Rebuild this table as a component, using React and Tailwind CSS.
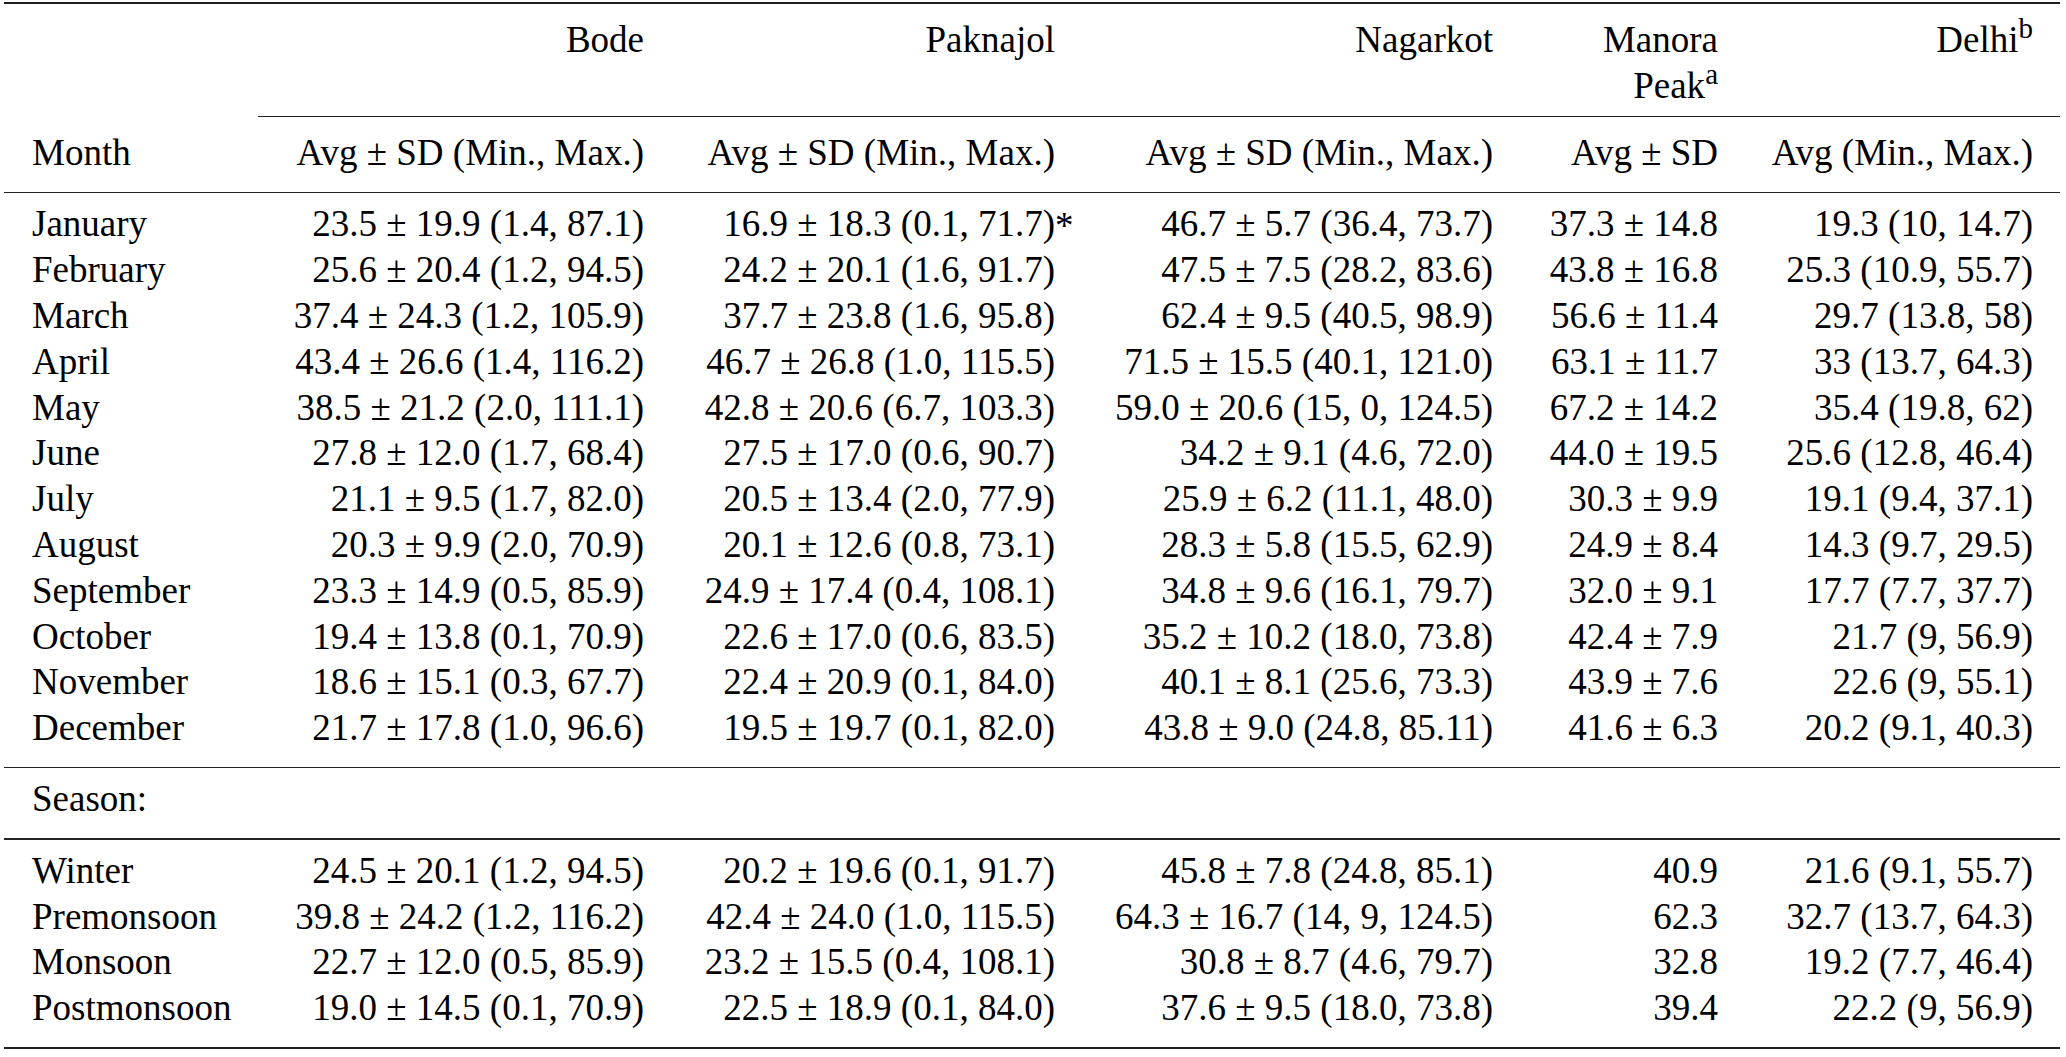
import React from 'react';

const months = [
  ['January', '23.5 ± 19.9 (1.4, 87.1)', '16.9 ± 18.3 (0.1, 71.7)', '46.7 ± 5.7 (36.4, 73.7)', '37.3 ± 14.8', '19.3 (10, 14.7)'],
  ['February', '25.6 ± 20.4 (1.2, 94.5)', '24.2 ± 20.1 (1.6, 91.7)', '47.5 ± 7.5 (28.2, 83.6)', '43.8 ± 16.8', '25.3 (10.9, 55.7)'],
  ['March', '37.4 ± 24.3 (1.2, 105.9)', '37.7 ± 23.8 (1.6, 95.8)', '62.4 ± 9.5 (40.5, 98.9)', '56.6 ± 11.4', '29.7 (13.8, 58)'],
  ['April', '43.4 ± 26.6 (1.4, 116.2)', '46.7 ± 26.8 (1.0, 115.5)', '71.5 ± 15.5 (40.1, 121.0)', '63.1 ± 11.7', '33 (13.7, 64.3)'],
  ['May', '38.5 ± 21.2 (2.0, 111.1)', '42.8 ± 20.6 (6.7, 103.3)', '59.0 ± 20.6 (15, 0, 124.5)', '67.2 ± 14.2', '35.4 (19.8, 62)'],
  ['June', '27.8 ± 12.0 (1.7, 68.4)', '27.5 ± 17.0 (0.6, 90.7)', '34.2 ± 9.1 (4.6, 72.0)', '44.0 ± 19.5', '25.6 (12.8, 46.4)'],
  ['July', '21.1 ± 9.5 (1.7, 82.0)', '20.5 ± 13.4 (2.0, 77.9)', '25.9 ± 6.2 (11.1, 48.0)', '30.3 ± 9.9', '19.1 (9.4, 37.1)'],
  ['August', '20.3 ± 9.9 (2.0, 70.9)', '20.1 ± 12.6 (0.8, 73.1)', '28.3 ± 5.8 (15.5, 62.9)', '24.9 ± 8.4', '14.3 (9.7, 29.5)'],
  ['September', '23.3 ± 14.9 (0.5, 85.9)', '24.9 ± 17.4 (0.4, 108.1)', '34.8 ± 9.6 (16.1, 79.7)', '32.0 ± 9.1', '17.7 (7.7, 37.7)'],
  ['October', '19.4 ± 13.8 (0.1, 70.9)', '22.6 ± 17.0 (0.6, 83.5)', '35.2 ± 10.2 (18.0, 73.8)', '42.4 ± 7.9', '21.7 (9, 56.9)'],
  ['November', '18.6 ± 15.1 (0.3, 67.7)', '22.4 ± 20.9 (0.1, 84.0)', '40.1 ± 8.1 (25.6, 73.3)', '43.9 ± 7.6', '22.6 (9, 55.1)'],
  ['December', '21.7 ± 17.8 (1.0, 96.6)', '19.5 ± 19.7 (0.1, 82.0)', '43.8 ± 9.0 (24.8, 85.11)', '41.6 ± 6.3', '20.2 (9.1, 40.3)'],
];

const seasons = [
  ['Winter', '24.5 ± 20.1 (1.2, 94.5)', '20.2 ± 19.6 (0.1, 91.7)', '45.8 ± 7.8 (24.8, 85.1)', '40.9', '21.6 (9.1, 55.7)'],
  ['Premonsoon', '39.8 ± 24.2 (1.2, 116.2)', '42.4 ± 24.0 (1.0, 115.5)', '64.3 ± 16.7 (14, 9, 124.5)', '62.3', '32.7 (13.7, 64.3)'],
  ['Monsoon', '22.7 ± 12.0 (0.5, 85.9)', '23.2 ± 15.5 (0.4, 108.1)', '30.8 ± 8.7 (4.6, 79.7)', '32.8', '19.2 (7.7, 46.4)'],
  ['Postmonsoon', '19.0 ± 14.5 (0.1, 70.9)', '22.5 ± 18.9 (0.1, 84.0)', '37.6 ± 9.5 (18.0, 73.8)', '39.4', '22.2 (9, 56.9)'],
];

// right-aligned value columns after the label column
const colW = ['w-[386px]', 'w-[411px]', 'w-[438px]', 'w-[225px]', 'w-[315px]'];

function Row({ cells, star }) {
  return (
    <div className="flex whitespace-nowrap">
      <div className="w-[254px] pl-[28px]">{cells[0]}</div>
      {cells.slice(1).map((c, i) => (
        <div key={i} className={`${colW[i]} text-right`}>
          {star && i === 1 ? (
            <span className="relative">
              {c}
              <span className="absolute left-full top-0">*</span>
            </span>
          ) : (
            c
          )}
        </div>
      ))}
    </div>
  );
}

export default function App() {
  return (
    <div className="bg-white w-[2066px] h-[1057px] text-black [font-family:'Liberation_Serif','Times_New_Roman',serif] text-[37px] leading-[45.8px]">
      <div className="ml-[4px] w-[2056px] pt-[2px]">
        <div className="h-[2px] bg-[#1e1e1e]" />

        {/* site headers */}
        <div className="flex pt-[13px] pb-[7px]">
          <div className="w-[254px]" />
          <div className="w-[386px] text-right">Bode</div>
          <div className="w-[411px] text-right">Paknajol</div>
          <div className="w-[438px] text-right">Nagarkot</div>
          <div className="w-[225px] text-right">
            <div>Manora</div>
            <div>
              Peak<sup className="text-[29px] top-[-14px]">a</sup>
            </div>
          </div>
          <div className="w-[315px] text-right">
            Delhi<sup className="text-[29px] top-[-14px]">b</sup>
          </div>
        </div>
        <div className="ml-[254px] h-[1.5px] bg-[#222]" />

        <div className="pt-[13px] pb-[16px]">
          <Row cells={['Month', 'Avg ± SD (Min., Max.)', 'Avg ± SD (Min., Max.)', 'Avg ± SD (Min., Max.)', 'Avg ± SD', 'Avg (Min., Max.)']} />
        </div>
        <div className="h-[1.5px] bg-[#222]" />

        <div className="pt-[8px] pb-[16px]">
          {months.map((r, i) => (
            <Row key={r[0]} cells={r} star={i === 0} />
          ))}
        </div>
        <div className="h-[1.5px] bg-[#222]" />

        <div className="pt-[8px] pb-[16px] pl-[28px]">Season:</div>
        <div className="h-[1.5px] bg-[#222]" />

        <div className="pt-[8px] pb-[16px]">
          {seasons.map((r) => (
            <Row key={r[0]} cells={r} />
          ))}
        </div>
        <div className="h-[2px] bg-[#1e1e1e]" />
      </div>
    </div>
  );
}
